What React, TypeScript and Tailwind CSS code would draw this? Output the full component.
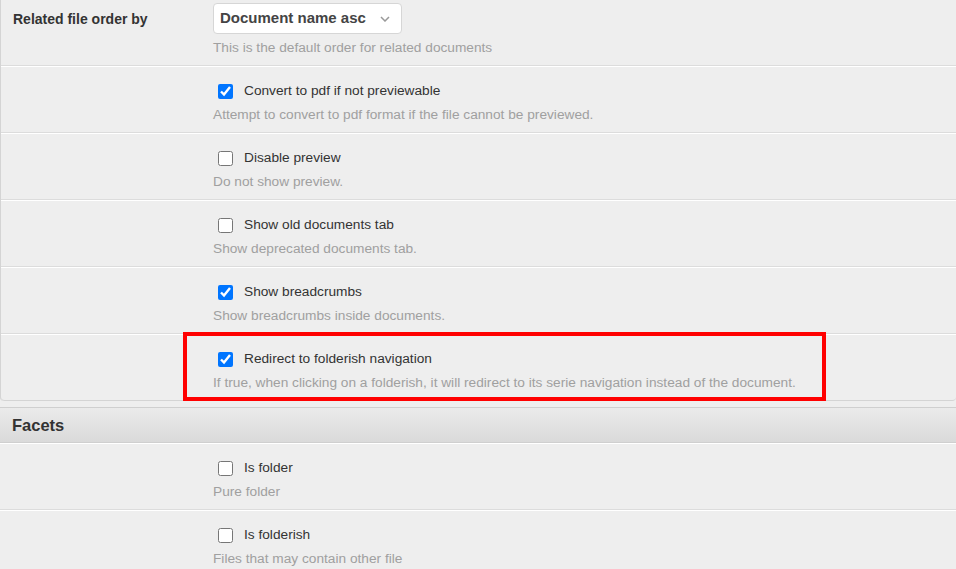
import React from 'react';

type Opt = { label: string; help: string; checked: boolean; marked?: boolean };

const general: Opt[] = [
  { label: 'Convert to pdf if not previewable', help: 'Attempt to convert to pdf format if the file cannot be previewed.', checked: true },
  { label: 'Disable preview', help: 'Do not show preview.', checked: false },
  { label: 'Show old documents tab', help: 'Show deprecated documents tab.', checked: false },
  { label: 'Show breadcrumbs', help: 'Show breadcrumbs inside documents.', checked: true },
  {
    label: 'Redirect to folderish navigation',
    help: 'If true, when clicking on a folderish, it will redirect to its serie navigation instead of the document.',
    checked: true,
    marked: true,
  },
];

const facets: Opt[] = [
  { label: 'Is folder', help: 'Pure folder', checked: false },
  { label: 'Is folderish', help: 'Files that may contain other file', checked: false },
];

function CheckRow({ opt, last, inPanel }: { opt: Opt; last?: boolean; inPanel?: boolean }) {
  return (
    <div
      className={
        'relative flex border-t border-t-white pt-[14px] pb-[7px] ' +
        (inPanel ? 'pl-[212px] ' : 'pl-[213px] ') +
        (last ? 'rounded-b-[4px] border-b border-b-[#d4d4d4]' : 'border-b border-b-[#dcdcdc]')
      }
    >
      <div className="flex flex-col">
        <label className="flex h-5 items-center text-[13.7px] text-[#333]">
          <input type="checkbox" defaultChecked={opt.checked} className="ml-[5px] mr-[11px] h-[15px] w-[15px]" />
          <span className="pt-[1px]">{opt.label}</span>
        </label>
        <p className="mt-[4px] h-5 text-[13.7px] leading-5 text-[#a0a0a0]">{opt.help}</p>
      </div>
      {opt.marked && (
        <div className="pointer-events-none absolute left-[182px] top-[-3px] h-[69px] w-[643px] border-[4px] border-[#ff0000]" />
      )}
    </div>
  );
}

export default function App() {
  return (
    <div className="h-[569px] w-[956px] overflow-hidden bg-[#eeeeee] font-['Liberation_Sans',Arial,sans-serif]">
      <div className="rounded-b-[4px] border-l border-l-[#d4d4d4]">
        <div className="flex h-[66px] border-b border-b-[#dcdcdc]">
          <div className="w-[212px] pl-[12px] pt-[9px] text-[14px] font-bold text-[#333]">Related file order by</div>
          <div className="flex flex-col pt-[3px]">
            <div className="flex h-[31px] w-[189px] items-center justify-between rounded-[4px] border border-[#d6d6d6] bg-white pl-[6px] pr-[11px]">
              <span className="text-[15px] font-bold text-[#444]">Document name asc</span>
              <svg width="10" height="6" viewBox="0 0 10 6" fill="none">
                <path d="M1 1l4 4 4-4" stroke="#999" strokeWidth="1.5" />
              </svg>
            </div>
            <p className="mt-[4px] text-[13.7px] leading-5 text-[#a0a0a0]">This is the default order for related documents</p>
          </div>
        </div>
        {general.map((o, i) => (
          <CheckRow key={o.label} opt={o} inPanel last={i === general.length - 1} />
        ))}
      </div>
      <div className="mt-[6px] flex h-[36px] items-center border-y border-[#cfcfcf] bg-gradient-to-b from-[#ebebeb] to-[#dadada] pl-[12px] pt-[1px] text-[16.5px] font-bold text-[#333]">
        Facets
      </div>
      {facets.map(o => (
        <CheckRow key={o.label} opt={o} />
      ))}
    </div>
  );
}
